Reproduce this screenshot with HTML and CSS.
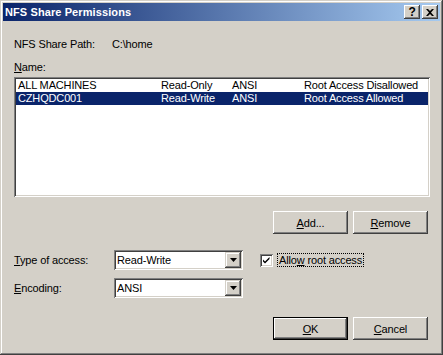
FILE: index.html
```html
<!DOCTYPE html>
<html lang="en">
<head>
    <meta charset="UTF-8">
    <meta name="viewport" content="width=device-width, initial-scale=1.0">
    <title>NFS Share Permissions</title>
    <link rel="stylesheet" href="styles.css">
</head>
<body>
    <div class="window">
        <div class="titlebar">
            <span class="title">NFS Share Permissions</span>
            <div class="caption-btns">
                <span class="cap-btn help">?</span>
                <span class="cap-btn close">
                    <svg width="8" height="7" viewBox="0 0 8 7"><path d="M0 0h2l2 2 2-2h2L5 3.5 8 7H6L4 5 2 7H0l3-3.5z" fill="#000"/></svg>
                </span>
            </div>
        </div>

        <div class="content">
            <div class="path-row">
                <span class="path-label">NFS Share Path:</span>
                <span>C:\home</span>
            </div>

            <div class="name-label"><u>N</u>ame:</div>

            <div class="listbox">
                <div class="list-row">
                    <span class="col-name">ALL MACHINES</span>
                    <span class="col-access">Read-Only</span>
                    <span class="col-enc">ANSI</span>
                    <span>Root Access Disallowed</span>
                </div>
                <div class="list-row selected">
                    <span class="col-name">CZHQDC001</span>
                    <span class="col-access">Read-Write</span>
                    <span class="col-enc">ANSI</span>
                    <span>Root Access Allowed</span>
                </div>
            </div>

            <div class="btn-row list-btns">
                <button class="btn"><u>A</u>dd...</button>
                <button class="btn"><u>R</u>emove</button>
            </div>

            <div class="field-row type-row">
                <span class="field-label"><u>T</u>ype of access:</span>
                <div class="combo">
                    <span class="combo-text">Read-Write</span>
                    <span class="combo-arrow"><svg width="7" height="4" viewBox="0 0 7 4"><path d="M0 0h7L3.5 4z" fill="#000"/></svg></span>
                </div>
                <label class="check">
                    <span class="checkbox">
                        <svg width="9" height="9" viewBox="0 0 9 9"><path d="M1 3.5l2 2 4.5-4.5v2L3 7.5l-2-2z" fill="#000"/></svg>
                    </span>
                    <span class="check-text">Allo<u>w</u> root access</span>
                </label>
            </div>

            <div class="field-row enc-row">
                <span class="field-label"><u>E</u>ncoding:</span>
                <div class="combo">
                    <span class="combo-text">ANSI</span>
                    <span class="combo-arrow"><svg width="7" height="4" viewBox="0 0 7 4"><path d="M0 0h7L3.5 4z" fill="#000"/></svg></span>
                </div>
            </div>

            <div class="btn-row dialog-btns">
                <button class="btn default"><u>O</u>K</button>
                <button class="btn"><u>C</u>ancel</button>
            </div>
        </div>
    </div>
</body>
</html>
```

FILE: styles.css
```css
body {
    margin: 0;
    font-family: "Liberation Sans", Arial, sans-serif;
    font-size: 11px;
    letter-spacing: -0.15px;
    color: #000;
    background: #d4d0c8;
}
.window {
    width: 443px;
    height: 355px;
    box-sizing: border-box;
    padding: 3px;
    background: #d4d0c8;
    box-shadow: inset -1px -1px #404040, inset 1px 1px #d4d0c8,
                inset -2px -2px #808080, inset 2px 2px #fff;
}
.titlebar {
    height: 18px;
    display: flex;
    align-items: flex-start;
    justify-content: space-between;
    padding: 0 2px;
    background: linear-gradient(to right, #0a246a, #a6caf0);
}
.title {
    color: #fff;
    font-weight: bold;
    line-height: 18px;
    letter-spacing: 0.1px;
}
.caption-btns {
    display: flex;
    gap: 2px;
    margin-top: 2px;
}
.cap-btn {
    width: 16px;
    height: 14px;
    display: flex;
    align-items: center;
    justify-content: center;
    background: #d4d0c8;
    box-shadow: inset -1px -1px #404040, inset 1px 1px #fff,
                inset -2px -2px #808080, inset 2px 2px #d4d0c8;
}
.help {
    font-weight: bold;
    font-size: 12px;
    line-height: 14px;
}
.content {
    padding-left: 11px;
}
.path-row {
    display: flex;
    margin-top: 17px;
    line-height: 13px;
}
.path-label {
    width: 98px;
}
.name-label {
    margin-top: 10px;
    line-height: 13px;
}
.listbox {
    width: 416px;
    height: 120px;
    margin-top: 3px;
    box-sizing: border-box;
    padding: 2px;
    background: #fff;
    box-shadow: inset 1px 1px #808080, inset -1px -1px #fff,
                inset 2px 2px #404040, inset -2px -2px #d4d0c8;
}
.list-row {
    display: flex;
    height: 13px;
    line-height: 13px;
    padding-left: 2px;
    white-space: nowrap;
}
.list-row.selected {
    background: #0a246a;
    color: #fff;
}
.col-name {
    width: 143px;
}
.col-access {
    width: 71px;
}
.col-enc {
    width: 72px;
}
.btn-row {
    display: flex;
    gap: 5px;
    margin-left: 259px;
}
.list-btns {
    margin-top: 14px;
}
.dialog-btns {
    margin-top: 19px;
}
.btn {
    width: 75px;
    height: 23px;
    padding: 0;
    border: none;
    background: #d4d0c8;
    font-family: inherit;
    font-size: 11px;
    letter-spacing: inherit;
    color: #000;
    box-shadow: inset -1px -1px #404040, inset 1px 1px #fff,
                inset -2px -2px #808080, inset 2px 2px #d4d0c8;
}
.btn.default {
    box-shadow: inset 0 0 0 1px #000, inset -2px -2px #404040,
                inset 2px 2px #fff, inset -3px -3px #808080;
}
.field-row {
    display: flex;
    align-items: center;
    height: 20px;
}
.type-row {
    margin-top: 16px;
}
.enc-row {
    margin-top: 8px;
}
.field-label {
    width: 100px;
}
.combo {
    width: 129px;
    height: 20px;
    box-sizing: border-box;
    display: flex;
    align-items: center;
    justify-content: space-between;
    padding: 2px;
    background: #fff;
    box-shadow: inset 1px 1px #808080, inset -1px -1px #fff,
                inset 2px 2px #404040, inset -2px -2px #d4d0c8;
}
.combo-text {
    padding-left: 1px;
}
.combo-arrow {
    width: 16px;
    height: 16px;
    display: flex;
    align-items: center;
    justify-content: center;
    background: #d4d0c8;
    box-shadow: inset -1px -1px #404040, inset 1px 1px #d4d0c8,
                inset -2px -2px #808080, inset 2px 2px #fff;
}
.check {
    display: flex;
    align-items: center;
    margin-left: 17px;
}
.checkbox {
    width: 13px;
    height: 13px;
    box-sizing: border-box;
    display: flex;
    align-items: center;
    justify-content: center;
    background: #fff;
    box-shadow: inset 1px 1px #808080, inset -1px -1px #fff,
                inset 2px 2px #404040, inset -2px -2px #d4d0c8;
}
.check-text {
    margin-left: 4px;
    padding: 0 1px;
    line-height: 12px;
    border: 1px dotted #000;
}
```
